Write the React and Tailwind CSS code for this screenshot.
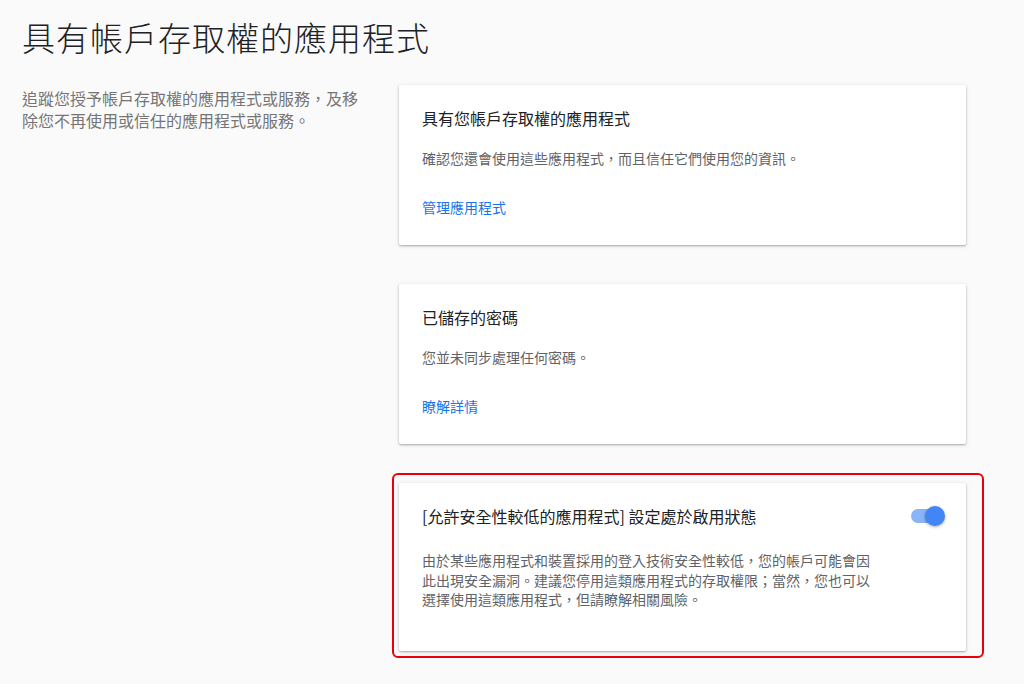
import React from "react";

const font = { fontFamily: '"Noto Sans CJK TC", "Noto Sans", Roboto, sans-serif' };

function Card({ title, desc, link }) {
  return (
    <div className="bg-white rounded-[2px] shadow-[0_1px_2px_rgba(60,64,67,0.35),0_1px_4px_rgba(60,64,67,0.15)] pl-[23px] pr-6 pt-[21px] pb-[28px] h-[160px]">
      <div className="text-[16px] leading-[24px] text-[#202124]">{title}</div>
      <div className="mt-[18px] text-[14px] leading-[20px] text-[#5f6368]">{desc}</div>
      <div className="mt-[29px] text-[14px] leading-[20px] text-[#1a73e8]">{link}</div>
    </div>
  );
}

export default function App() {
  return (
    <div className="min-h-[684px] w-[1024px] bg-[#fafafa] overflow-hidden" style={font}>
      <div className="pl-[22px] pt-[15px]">
        <h1 className="text-[33px] leading-[44px] font-light text-[#202124] tracking-[1px]">具有帳戶存取權的應用程式</h1>
        <div className="flex mt-[26px]">
          <div className="w-[377px] shrink-0 pr-[10px] text-[16px] leading-[22px] text-[#757575] pt-[2px]">
            追蹤您授予帳戶存取權的應用程式或服務，及移<br />除您不再使用或信任的應用程式或服務。
          </div>
          <div className="w-[567px] flex flex-col gap-[39px]">
            <Card
              title="具有您帳戶存取權的應用程式"
              desc="確認您還會使用這些應用程式，而且信任它們使用您的資訊。"
              link="管理應用程式"
            />
            <Card title="已儲存的密碼" desc="您並未同步處理任何密碼。" link="瞭解詳情" />
            <div className="relative">
              <div className="absolute left-[-7px] top-[-10px] right-[-18px] bottom-[-7px] border-2 border-[#e8000b] rounded-[6px] pointer-events-none" />
              <div className="relative bg-white rounded-[2px] shadow-[0_1px_2px_rgba(60,64,67,0.35),0_1px_4px_rgba(60,64,67,0.15)] pl-[23px] pr-[21px] pt-[21px] pb-[40px] h-[168px]">
                <div className="flex items-center justify-between">
                  <div className="text-[16px] leading-[24px] text-[#202124]">[允許安全性較低的應用程式] 設定處於啟用狀態</div>
                  <div className="relative w-[36px] h-[20px] flex items-center">
                    <div className="w-[32px] h-[14px] rounded-full bg-[#8ab4f8] ml-[2px]" />
                    <div className="absolute right-0 top-0 w-[20px] h-[20px] rounded-full bg-[#4285f4] shadow-[0_1px_3px_rgba(0,0,0,0.35)]" />
                  </div>
                </div>
                <div className="mt-[23px] text-[14px] leading-[19.5px] text-[#5f6368]">
                  由於某些應用程式和裝置採用的登入技術安全性較低，您的帳戶可能會因<br />
                  此出現安全漏洞。建議您停用這類應用程式的存取權限；當然，您也可以<br />
                  選擇使用這類應用程式，但請瞭解相關風險。
                </div>
              </div>
            </div>
          </div>
        </div>
      </div>
    </div>
  );
}
